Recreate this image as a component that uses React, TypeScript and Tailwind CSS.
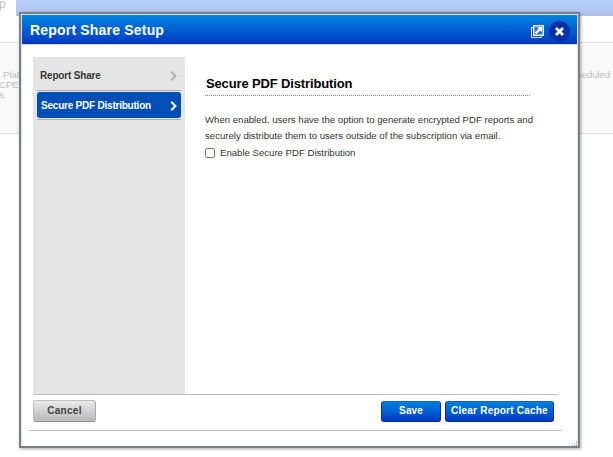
import React from "react";

function Chevron({ color }: { color: string }) {
  return (
    <svg width="7" height="10" viewBox="0 0 7 10" fill="none" stroke={color} strokeWidth="2">
      <path d="M1.2 0.7 L5.4 5 L1.2 9.3" />
    </svg>
  );
}

function PopOutIcon() {
  return (
    <svg width="13" height="13" viewBox="0 0 13 13" fill="none">
      <path d="M2 2.5H0.5V12.5H10.5V11" stroke="#d8e8fb" strokeWidth="1" />
      <rect x="2.7" y="0.7" width="9.6" height="9.6" fill="#2c6dd6" stroke="#fff" strokeWidth="1.4" />
      <path d="M6 2h5v5L9.2 5.4 5.4 9.2 3.8 7.6 7.6 3.8z" fill="#fff" />
    </svg>
  );
}

function SideItem({ label, active }: { label: string; active?: boolean }) {
  return (
    <div className={active ? "h-[29px] border-b border-[#b0b0b0] pt-[1px]" : "h-[29px] border-b border-[#b0b0b0]"}>
      <div
        className={
          active
            ? "flex h-[26px] items-center justify-between rounded-[3px] bg-[#004fb6] pl-1 pr-1 text-white"
            : "flex h-7 items-center justify-between pl-[3px] pr-1 text-[#383838]"
        }
      >
        <span className={active ? "text-[10px] font-bold tracking-[-0.22px]" : "pb-[2px] text-[10px] font-bold tracking-[-0.18px]"}>
          {label}
        </span>
        <span className={active ? "pt-[1px]" : ""}>
          <Chevron color={active ? "#ffffff" : "#b2b2b2"} />
        </span>
      </div>
    </div>
  );
}

const blueButton =
  "flex h-[21px] items-center justify-center rounded-[3px] border border-[#0a2fa0] border-t-[#1263c4] bg-linear-to-b from-[#0380df] to-[#0036c5] pb-[2px] text-[10px] font-bold text-white";

export default function App() {
  return (
    <div className="relative h-[457px] w-[613px] overflow-hidden bg-white font-['Liberation_Sans',Arial,sans-serif]">
      <div className="flex h-4">
        <div className="w-4 text-[12px] leading-[8px] text-[#bdbdc8]">
          <span className="block -translate-x-[1px]">p</span>
        </div>
        <div className="flex-1 bg-linear-to-b from-[#b4cff3] to-[#b0c0ee]" />
      </div>
      <div className="mt-[26px] flex h-[92px] justify-between border-y border-[#dedede] bg-[#fafafa] pt-[27px] text-[9.6px] leading-[10px] text-[#bdbdbd]">
        <div className="whitespace-pre">
          <div className="pl-[3px]">Platform</div>
          <div className="-ml-[1px]">CPE</div>
          <div className="-ml-[1px]">s.</div>
        </div>
        <div className="pr-[3px] tracking-[-0.1px]">scheduled</div>
      </div>

      <div className="absolute left-[19px] top-3 flex h-[436px] w-[561px] flex-col border-2 border-[#7c7f84] bg-white shadow-[1px_1px_3px_rgba(0,0,0,0.35)]">
        <header className="flex h-[31px] shrink-0 items-center justify-between border border-[#d3dfea] bg-linear-to-b from-[#0383df] to-[#0036c4] pl-2 pr-[7px]">
          <h1 className="pt-[2px] text-[14px] font-bold tracking-[0.19px] text-white">Report Share Setup</h1>
          <div className="flex items-center gap-[5px] pt-[4px]">
            <PopOutIcon />
            <span className="flex size-[21px] items-center justify-center rounded-full bg-[#0730a8]">
              <svg width="9" height="9" viewBox="0 0 9 9" stroke="#fff" strokeWidth="2.8">
                <path d="M1 1 L8 8 M8 1 L1 8" />
              </svg>
            </span>
          </div>
        </header>

        <div className="flex flex-1 flex-col border-x border-[#d3e6f1]">
          <div className="ml-[11px] mr-[19px] mt-3 flex h-[338px] border-b border-[#bebfc1]">
            <nav className="w-[152px] bg-[#e5e5e5] px-1 pt-[5px]">
              <SideItem label="Report Share" />
              <SideItem label="Secure PDF Distribution" active />
            </nav>
            <main className="w-[345px] pl-5 pt-[19px]">
              <h2 className="h-5 border-b border-dotted border-[#808080] pl-[1px] text-[13px] font-bold leading-[15px] tracking-[-0.14px] text-black">
                Secure PDF Distribution
              </h2>
              <p className="mt-4 whitespace-nowrap text-[9.6px] leading-4 text-[#333]">
                When enabled, users have the option to generate encrypted PDF reports and
                <br />
                securely distribute them to users outside of the subscription via email.
              </p>
              <label className="mt-[1px] flex items-center text-[9.6px] leading-4 text-[#333]">
                <input
                  type="checkbox"
                  className="mr-[5px] size-[10px] appearance-none rounded-[2px] border border-[#777] bg-white"
                />
                Enable Secure PDF Distribution
              </label>
            </main>
          </div>

          <footer className="ml-[7px] mr-[15px] flex h-9 items-start border-b border-[#c2c2c2] pl-1 pr-2">
            <button className="mt-[5px] flex h-[22px] w-[63px] items-center justify-center rounded-[3px] border border-[#bdbdbd] border-b-[#8d8d8d] border-r-[#a8a8a8] bg-linear-to-b from-[#ebebeb] to-[#b8b8b8] pb-px text-[10px] font-bold tracking-[0.3px] text-[#444]">
              Cancel
            </button>
            <div className="ml-auto mt-[6px] flex gap-1">
              <button className={blueButton + " w-[60px] tracking-[0.1px]"}>Save</button>
              <button className={blueButton + " w-[109px] tracking-[0.22px]"}>Clear Report Cache</button>
            </div>
          </footer>
        </div>
        <svg className="absolute bottom-0 right-0" width="6" height="5" viewBox="0 0 6 5" fill="#999">
          <path d="M4 0h1v1h-1zM2 2h1v1h-1zM4 2h1v1h-1zM0 4h1v1h-1zM2 4h1v1h-1zM4 4h1v1h-1z" />
        </svg>
      </div>
    </div>
  );
}
